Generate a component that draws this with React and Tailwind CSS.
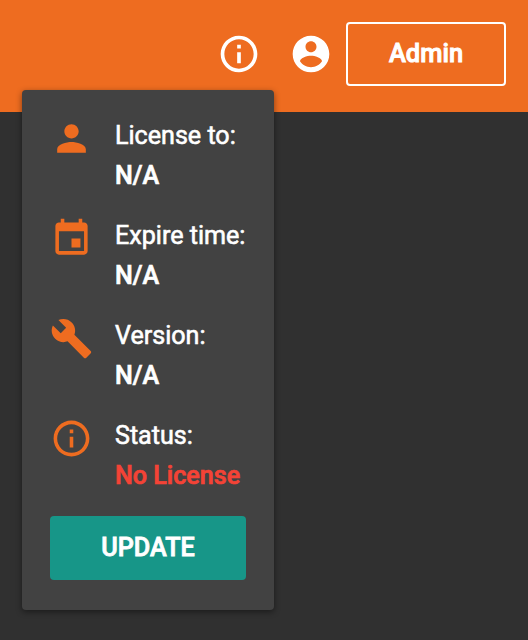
const icons = {
  person: "M12 12c2.21 0 4-1.79 4-4s-1.79-4-4-4-4 1.79-4 4 1.79 4 4 4zm0 2c-2.67 0-8 1.34-8 4v2h16v-2c0-2.66-5.33-4-8-4z",
  event: "M17 12h-5v5h5v-5zM16 1v2H8V1H6v2H5c-1.11 0-1.99.9-1.99 2L3 19c0 1.1.89 2 2 2h14c1.1 0 2-.9 2-2V5c0-1.1-.9-2-2-2h-1V1h-2zm3 18H5V8h14v11z",
  build: "M22.7 19l-9.1-9.1c.9-2.3.4-5-1.5-6.9-2-2-5-2.4-7.4-1.3L9 6 6 9 1.6 4.7C.4 7.1.9 10.1 2.9 12.1c1.9 1.9 4.6 2.4 6.9 1.5l9.1 9.1c.4.4 1 .4 1.4 0l2.3-2.3c.5-.4.5-1.1.1-1.4z",
  info: "M11 17h2v-6h-2v6zm1-15C6.48 2 2 6.48 2 12s4.48 10 10 10 10-4.48 10-10S17.52 2 12 2zm0 18c-4.41 0-8-3.59-8-8s3.59-8 8-8 8 3.59 8 8-3.59 8-8 8zM11 9h2V7h-2v2z",
  account: "M12 2C6.48 2 2 6.48 2 12s4.48 10 10 10 10-4.48 10-10S17.52 2 12 2zm0 3c1.66 0 3 1.34 3 3s-1.34 3-3 3-3-1.34-3-3 1.34-3 3-3zm0 14.2c-2.5 0-4.71-1.28-6-3.22.03-1.99 4-3.08 6-3.08 1.99 0 5.97 1.09 6 3.08-1.29 1.94-3.5 3.22-6 3.22z",
};

function Icon({ name, className }) {
  return (
    <svg viewBox="0 0 24 24" fill="currentColor" className={className} aria-hidden="true">
      <path d={icons[name]} />
    </svg>
  );
}

const rows = [
  { icon: "person", label: "License to:", value: "N/A" },
  { icon: "event", label: "Expire time:", value: "N/A" },
  { icon: "build", label: "Version:", value: "N/A" },
  { icon: "info", label: "Status:", value: "No License", alert: true },
];

export default function App() {
  return (
    <div className="relative h-[640px] w-[528px] overflow-hidden bg-[#303030] font-['Roboto',sans-serif] text-white">
      <header className="flex h-28 items-start justify-end bg-[#ee6c20] pt-[22px] pr-[22px]">
        <Icon name="info" className="mt-[10.4px] mr-7 size-11" />
        <Icon name="account" className="mt-[10.4px] mr-[13px] size-11" />
        <button className="flex h-16 w-40 items-center justify-center rounded-[4px] border-2 border-white pb-[2px] text-[25.5px] font-medium [-webkit-text-stroke:0.9px_currentColor]">
          Admin
        </button>
      </header>
      <section className="absolute top-[90px] left-[22px] h-[520px] w-[252px] rounded-[4px] bg-[#424242] px-7 pt-[26px] shadow-[0_2px_6px_rgba(0,0,0,0.45)]">
        <div className="flex flex-col gap-5">
          {rows.map((row) => (
            <div key={row.label} className="flex h-20">
              <Icon name={row.icon} className="mt-px mr-[22px] size-[43px] shrink-0 text-[#ee6c20]" />
              <div className="text-[25.1px] leading-10 whitespace-nowrap">
                <div className="[-webkit-text-stroke:0.6px_currentColor]">{row.label}</div>
                <div className={row.alert ? "font-medium text-[#f44336] [-webkit-text-stroke:0.7px_currentColor]" : "font-medium [-webkit-text-stroke:0.7px_currentColor]"}>{row.value}</div>
              </div>
            </div>
          ))}
        </div>
        <button className="mt-5 flex h-16 w-full items-center justify-center rounded-[4px] bg-[#179688] text-[25.2px] font-medium [-webkit-text-stroke:0.8px_currentColor]">
          UPDATE
        </button>
      </section>
    </div>
  );
}
